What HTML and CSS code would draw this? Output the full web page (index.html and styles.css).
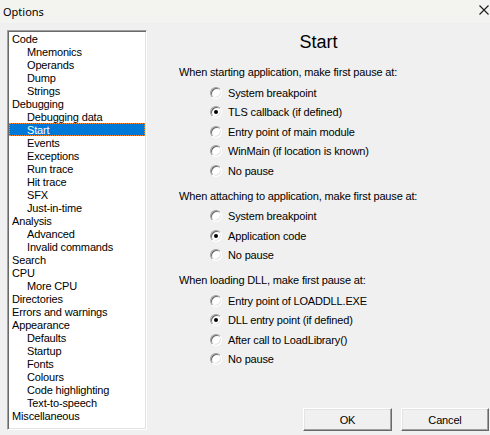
FILE: index.html
```html
<!DOCTYPE html>
<html>
<head>
<meta charset="utf-8">
<title>Options</title>
<link rel="stylesheet" href="styles.css">
</head>
<body>
<div class="window">
  <div class="titlebar">
    <span class="title">Options</span>
    <svg class="close" viewBox="0 0 10 10" width="10" height="10"><path d="M0.5 0.5 L9.5 9.5 M9.5 0.5 L0.5 9.5" stroke="#1b1b1b" stroke-width="1.1" fill="none"/></svg>
  </div>
  <div class="content">
    <div class="tree">
      <div class="item">Code</div>
      <div class="item child">Mnemonics</div>
      <div class="item child">Operands</div>
      <div class="item child">Dump</div>
      <div class="item child">Strings</div>
      <div class="item">Debugging</div>
      <div class="item child">Debugging data</div>
      <div class="item child selected">Start</div>
      <div class="item child">Events</div>
      <div class="item child">Exceptions</div>
      <div class="item child">Run trace</div>
      <div class="item child">Hit trace</div>
      <div class="item child">SFX</div>
      <div class="item child">Just-in-time</div>
      <div class="item">Analysis</div>
      <div class="item child">Advanced</div>
      <div class="item child">Invalid commands</div>
      <div class="item">Search</div>
      <div class="item">CPU</div>
      <div class="item child">More CPU</div>
      <div class="item">Directories</div>
      <div class="item">Errors and warnings</div>
      <div class="item">Appearance</div>
      <div class="item child">Defaults</div>
      <div class="item child">Startup</div>
      <div class="item child">Fonts</div>
      <div class="item child">Colours</div>
      <div class="item child">Code highlighting</div>
      <div class="item child">Text-to-speech</div>
      <div class="item">Miscellaneous</div>
    </div>
    <div class="panel">
      <h1 class="heading">Start</h1>
      <div class="group">
        <div class="group-label">When starting application, make first pause at:</div>
        <div class="radio"><span class="radio-box"></span><span>System breakpoint</span></div>
        <div class="radio"><span class="radio-box checked"></span><span>TLS callback (if defined)</span></div>
        <div class="radio"><span class="radio-box"></span><span>Entry point of main module</span></div>
        <div class="radio"><span class="radio-box"></span><span>WinMain (if location is known)</span></div>
        <div class="radio"><span class="radio-box"></span><span>No pause</span></div>
      </div>
      <div class="group">
        <div class="group-label">When attaching to application, make first pause at:</div>
        <div class="radio"><span class="radio-box"></span><span>System breakpoint</span></div>
        <div class="radio"><span class="radio-box checked"></span><span>Application code</span></div>
        <div class="radio"><span class="radio-box"></span><span>No pause</span></div>
      </div>
      <div class="group">
        <div class="group-label">When loading DLL, make first pause at:</div>
        <div class="radio"><span class="radio-box"></span><span>Entry point of LOADDLL.EXE</span></div>
        <div class="radio"><span class="radio-box checked"></span><span>DLL entry point (if defined)</span></div>
        <div class="radio"><span class="radio-box"></span><span>After call to LoadLibrary()</span></div>
        <div class="radio"><span class="radio-box"></span><span>No pause</span></div>
      </div>
      <div class="buttons">
        <button class="btn btn-ok">OK</button>
        <button class="btn btn-cancel">Cancel</button>
      </div>
    </div>
  </div>
</div>
</body>
</html>
```

FILE: styles.css
```css
html, body {
  margin: 0;
  padding: 0;
  height: 435px;
  overflow: hidden;
  background: #f0f0f0;
}

body {
  font-family: "Liberation Sans", Arial, sans-serif;
  font-size: 11px;
  letter-spacing: -0.16px;
  color: #000;
}

.window {
  height: 435px;
  display: flex;
  flex-direction: column;
}

.titlebar {
  height: 23px;
  flex: none;
  background: #f3f3ef;
  display: flex;
  align-items: center;
  justify-content: space-between;
  padding-left: 3px;
  padding-right: 1px;
}

.title {
  font-family: "Noto Sans", "Liberation Sans", sans-serif;
  font-size: 11px;
  letter-spacing: 0;
  line-height: 23px;
  color: #000;
}

.close {
  display: block;
  margin-top: -3px;
}

.content {
  flex: 1;
  display: flex;
  min-height: 0;
}

.tree {
  margin: 7px 0 0 7px;
  width: 136px;
  height: 396px;
  padding: 1px;
  background: #fff;
  border: 1px solid;
  border-color: #a0a0a0 #fff #fff #a0a0a0;
  box-shadow: inset 1px 1px #696969, inset -1px -1px #e3e3e3;
  flex: none;
}

.item {
  height: 13px;
  line-height: 15px;
  padding-left: 3px;
  white-space: nowrap;
}

.item.child {
  padding-left: 18px;
}

.item.selected {
  background: #0078d7;
  color: #fff;
  outline: 1px dotted #ff8c2a;
  outline-offset: -1px;
}

.panel {
  flex: 1;
  display: flex;
  flex-direction: column;
  padding: 9px 0 4px 0;
}

.heading {
  margin: 0;
  font-size: 18px;
  font-weight: normal;
  letter-spacing: 0;
  line-height: 20px;
  height: 20px;
  text-align: center;
}

.group {
  padding-left: 32px;
  margin-top: 5px;
}

.group:first-of-type {
  margin-top: 10px;
}

.group-label {
  height: 21px;
  line-height: 21px;
  white-space: nowrap;
}

.radio {
  height: 19.5px;
  display: flex;
  align-items: center;
  padding-left: 31px;
  white-space: nowrap;
}

.radio-box {
  position: relative;
  width: 10px;
  height: 10px;
  flex: none;
  margin-right: 6px;
  border: 1px solid;
  border-color: #a0a0a0 #fff #fff #a0a0a0;
  border-radius: 50%;
  background: #fff;
  box-shadow: inset 1px 1px #696969, inset -1px -1px #e3e3e3;
}

.radio-box.checked::after {
  content: "";
  position: absolute;
  left: 3px;
  top: 3px;
  width: 4px;
  height: 4px;
  border-radius: 50%;
  background: #000;
}

.buttons {
  margin-top: auto;
  display: flex;
  justify-content: flex-end;
  gap: 9px;
  padding-right: 1px;
}

.btn {
  height: 23px;
  padding: 0;
  font: inherit;
  letter-spacing: -0.16px;
  color: #000;
  background: #f0f0f0;
  border: 1px solid;
  border-color: #fff #696969 #696969 #fff;
  box-shadow: inset -1px -1px #a0a0a0, inset 1px 1px #e3e3e3;
}

.btn-ok {
  width: 89px;
}

.btn-cancel {
  width: 88px;
}
```
